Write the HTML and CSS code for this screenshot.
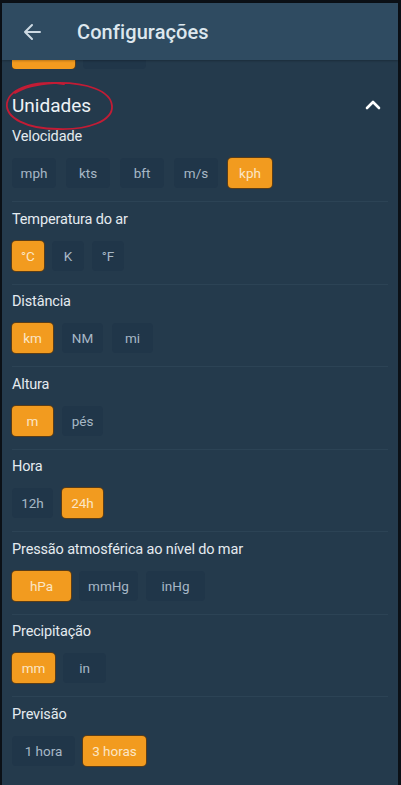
FILE: index.html
```html
<!DOCTYPE html>
<html lang="pt">
<head>
<meta charset="utf-8">
<link rel="stylesheet" href="styles.css">
</head>
<body>
<div class="screen">
  <header class="appbar">
    <svg class="back" width="20" height="18" viewBox="0 0 20 18"><path d="M18 9H3M10 2L3 9l7 7" fill="none" stroke="#cdd9e2" stroke-width="2" stroke-linecap="round" stroke-linejoin="round"/></svg>
    <h1 class="title">Configurações</h1>
  </header>
  <div class="content">
    <div class="peek">
      <div class="row row-prev">
        <span class="btn on"></span><span class="btn"></span>
      </div>
    </div>
    <div class="group-head">
      <h2 class="group-title">Unidades</h2>
      <svg class="chev" width="16" height="10" viewBox="0 0 16 10"><path d="M2 8l6-6 6 6" fill="none" stroke="#ffffff" stroke-width="2.6" stroke-linecap="round" stroke-linejoin="round"/></svg>
      <svg class="scribble" width="116" height="54" viewBox="0 0 116 54"><path d="M62 5C36 1 8 8 5 24 3 39 25 50 56 50 86 51 111 42 110 27 109 12 85 3 52 4 36 5 22 8 13 14" fill="none" stroke="#c21c35" stroke-width="1.8" stroke-linecap="round"/></svg>
    </div>

    <section class="sec">
      <div class="label">Velocidade</div>
      <div class="row row-speed">
        <span class="btn">mph</span><span class="btn">kts</span><span class="btn">bft</span><span class="btn">m/s</span><span class="btn on">kph</span>
      </div>
    </section>
    <section class="sec">
      <div class="label">Temperatura do ar</div>
      <div class="row row-temp">
        <span class="btn on">°C</span><span class="btn">K</span><span class="btn">°F</span>
      </div>
    </section>
    <section class="sec">
      <div class="label">Distância</div>
      <div class="row row-dist">
        <span class="btn on">km</span><span class="btn">NM</span><span class="btn">mi</span>
      </div>
    </section>
    <section class="sec">
      <div class="label">Altura</div>
      <div class="row row-dist">
        <span class="btn on">m</span><span class="btn">pés</span>
      </div>
    </section>
    <section class="sec">
      <div class="label">Hora</div>
      <div class="row row-dist">
        <span class="btn">12h</span><span class="btn on">24h</span>
      </div>
    </section>
    <section class="sec">
      <div class="label">Pressão atmosférica ao nível do mar</div>
      <div class="row row-press">
        <span class="btn on">hPa</span><span class="btn">mmHg</span><span class="btn">inHg</span>
      </div>
    </section>
    <section class="sec">
      <div class="label">Precipitação</div>
      <div class="row row-prec">
        <span class="btn on">mm</span><span class="btn">in</span>
      </div>
    </section>
    <section class="sec last">
      <div class="label">Previsão</div>
      <div class="row row-prev">
        <span class="btn">1 hora</span><span class="btn on">3 horas</span>
      </div>
    </section>
  </div>
</div>
</body>
</html>
```
FILE: styles.css
```css
* { box-sizing: border-box; }
html, body { margin: 0; padding: 0; }
body {
  background: #0b1016;
  font-family: Roboto, "Noto Sans", sans-serif;
  width: 401px;
  height: 785px;
  overflow: hidden;
}
.screen {
  margin: 0 3px 0 2px;
  height: 785px;
  background: #243a4c;
  padding-top: 3px;
  background-clip: content-box;
}
.appbar {
  height: 57px;
  background: #2f4b61;
  display: flex;
  align-items: center;
  padding-left: 20px;
  position: relative;
  z-index: 2;
  box-shadow: 0 1px 2px rgba(0,0,0,0.25);
}
.title {
  margin: 0 0 0 35px;
  font-size: 20px;
  font-weight: 500;
  color: #dde7ee;
  letter-spacing: 0.1px;
}
.content {
  background: #243a4c;
  padding: 0 10px;
}
.peek {
  height: 9px;
  overflow: hidden;
  display: flex;
  align-items: flex-end;
}
.peek .row { margin-top: 0; }
.group-head {
  position: relative;
  display: flex;
  align-items: center;
  justify-content: space-between;
  margin-top: 24px;
  height: 24px;
}
.group-title {
  margin: 0;
  font-size: 19px;
  font-weight: 400;
  color: #eef3f6;
}
.chev { margin-right: 7px; }
.scribble {
  position: absolute;
  left: -10px;
  top: -14px;
}
.sec {
  padding: 7.5px 0 13px;
  border-bottom: 1px solid #2c4355;
}
.sec:first-of-type { padding-top: 10px; }
.sec.last { border-bottom: none; }
.label {
  font-size: 14.5px;
  line-height: 20px;
  letter-spacing: -0.15px;
  color: #e4ebf0;
}
.row {
  display: flex;
  gap: 9px;
  margin-top: 11px;
}
.btn {
  height: 30px;
  width: 41px;
  border-radius: 4px;
  background: #203649;
  color: #a7b8c6;
  font-size: 13.5px;
  display: flex;
  align-items: center;
  justify-content: center;
}
.btn.on {
  background: #f29b1f;
  color: #fbe6c6;
  box-shadow: 0 0 0 1px #5a3d18;
}
.row-speed { gap: 10px; }
.row-speed .btn { width: 44px; }
.row-temp { gap: 8px; }
.row-temp .btn { width: 32px; }
.row-press { gap: 8px; }
.row-press .btn { width: 59px; }
.row-prec { gap: 8px; }
.row-prec .btn { width: 43px; }
.row-prev { gap: 8px; }
.row-prev .btn { width: 63px; }
```
